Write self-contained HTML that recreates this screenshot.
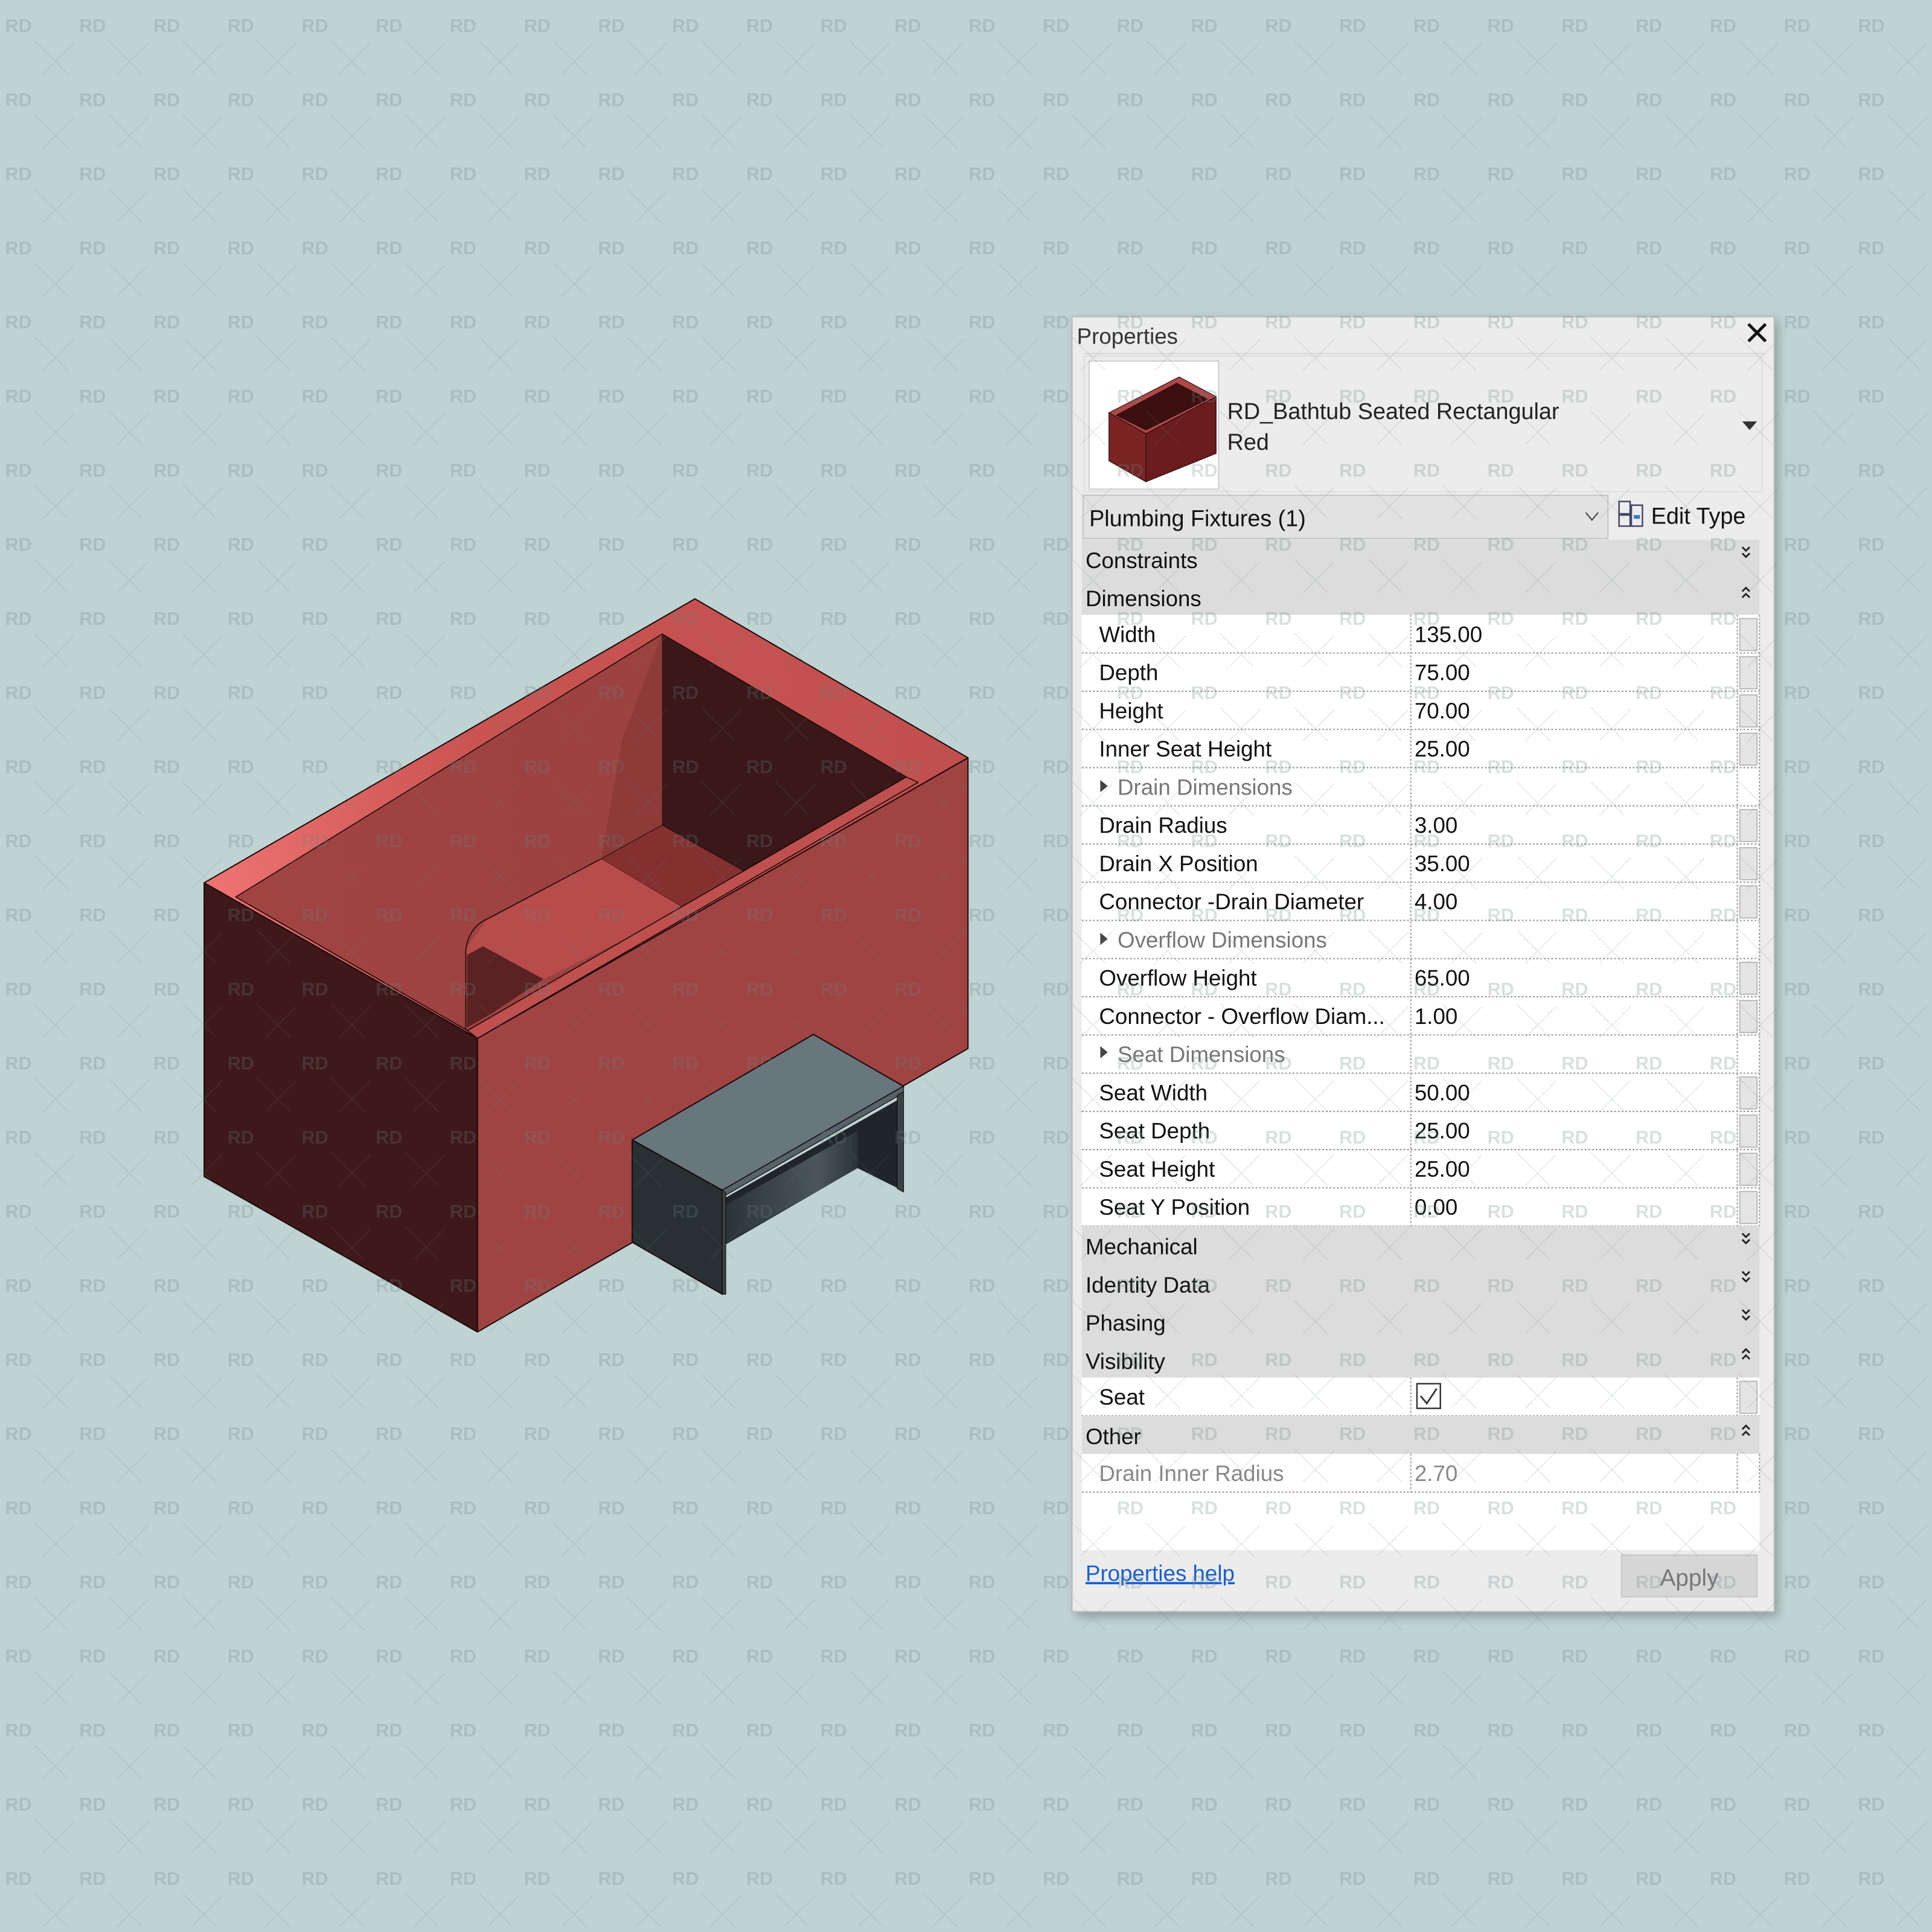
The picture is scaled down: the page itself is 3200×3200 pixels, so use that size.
<!DOCTYPE html>
<html><head><meta charset="utf-8"><style>
html,body{margin:0;padding:0;width:3200px;height:3200px;overflow:hidden;background:#bfd3d2}
svg{display:block}
text{font-family:"Liberation Sans","DejaVu Sans",sans-serif}
</style></head><body>
<svg width="3200" height="3200" viewBox="0 0 1568 1568" xmlns="http://www.w3.org/2000/svg">
<defs>
<pattern id="wm" x="0" y="0" width="60.15" height="60.15" patternUnits="userSpaceOnUse">
<text x="15" y="26" font-size="15" font-weight="bold" text-anchor="middle" fill="rgb(100,130,130)" fill-opacity="0.25">RD</text>
<path d="M28 33 L62 67 M62 33 L28 67" stroke="rgb(100,130,130)" stroke-opacity="0.18" stroke-width="0.8"/>
</pattern>
<linearGradient id="rim" x1="0" y1="0" x2="1" y2="0">
<stop offset="0" stop-color="#f07373"/><stop offset="0.35" stop-color="#c95452"/><stop offset="1" stop-color="#c0504e"/>
</linearGradient>
<linearGradient id="bw" x1="0" y1="0" x2="1" y2="0">
<stop offset="0" stop-color="#a04442"/><stop offset="0.85" stop-color="#9a4140"/><stop offset="1" stop-color="#6d2b2b"/>
</linearGradient>
<linearGradient id="bp" x1="0" y1="0" x2="1" y2="0">
<stop offset="0" stop-color="#2c3438"/><stop offset="0.7" stop-color="#4a565c"/><stop offset="1" stop-color="#2c3438"/>
</linearGradient>
<filter id="sh" x="-5%" y="-5%" width="110%" height="110%"><feGaussianBlur stdDeviation="4"/></filter>
</defs>
<rect width="1568" height="1568" fill="#bfd3d2"/>

<!-- bathtub -->
<g stroke="#1a0a0a" stroke-width="1" stroke-linejoin="round">
<polygon points="165.7,716.5 387.5,842.7 387.5,1081 165.7,954.8" fill="#3f1819"/>
<polygon points="387.5,842.7 785.6,615 785.6,851 387.5,1081" fill="#a04443"/>
<polygon points="165.7,716.5 564,486 785.6,615 387.5,842.7" fill="url(#rim)"/>
<polygon points="191.3,728 537.4,514.6 735.6,630.6 379.4,836.4" fill="url(#bw)" stroke-width="0.8"/>
<polygon points="537.4,514.6 735.6,630.6 603.6,706.7 537.4,669.6" fill="#3a1718" stroke-width="0.6"/>
<polygon points="537.4,514.6 537.4,669.6 488,697 505,600" fill="#8e3a39" stroke="none"/>
<polygon points="487.9,697 537.4,669.6 603.6,706.7 556.9,738" fill="#83302f" stroke-width="0.5"/>
<polygon points="395,747 487.9,697 556.9,738 441.1,794.6 378,812 378,770" fill="#b84c4b" stroke="none"/>
<path d="M378,836 L378,772 Q380,752 397,745 L487.9,697" fill="none" stroke-width="0.8"/>
<polygon points="379,834 379,775 392,768 441,794.6 400,822" fill="#5a2222" stroke="none"/>
<polygon points="379.4,836.4 735.6,630.6 745,635 387.5,842.7" fill="#c0504e" stroke-width="0.8"/>
<!-- bench -->
<polygon points="513.1,925.2 660.2,839.5 733.3,881.6 586.2,966" fill="#68767d"/>
<polygon points="513.1,925.2 586.2,966 586.2,1050.4 513.1,1008.2" fill="#283033"/>
<polygon points="589,972 728,893 728,964 696,948 589,1010" fill="#1f2528" stroke="none"/>
<polygon points="589,978 696,918 696,948 589,1009" fill="url(#bp)" stroke="none"/>
<polygon points="586.2,966 733.3,881.6 733.3,887 589,970" fill="#56636a" stroke-width="0.6"/>
<polygon points="728.2,889 733.3,886 733.3,967.4 728.2,964.6" fill="#3a4448" stroke-width="0.6"/>
<polygon points="586.2,966 589,968 589,1050.4 586.2,1050.4" fill="#3a4448" stroke-width="0.6"/>
</g>

<!-- panel -->
<rect x="873" y="260" width="570" height="1052" fill="#000" opacity="0.25" filter="url(#sh)"/>
<rect x="870" y="257" width="570" height="1051" fill="#ececec" stroke="#b9b9b9"/>
<text x="874" y="279" font-size="18" fill="#333">Properties</text>
<path d="M1419 263 L1433 277 M1433 263 L1419 277" stroke="#111" stroke-width="2.4"/>
<line x1="880" y1="287" x2="1432" y2="287" stroke="#d6d6d6"/>
<rect x="880" y="289" width="550" height="110" fill="#ececec" stroke="#dedede"/>
<rect x="884" y="293" width="105" height="104" fill="#fff" stroke="#d0d0d0"/>
<g stroke="#2a0c0c" stroke-width="0.6">
<polygon points="900,335 957,306 987,322 930,352" fill="#b04848"/>
<polygon points="930,352 987,322 987,368 930,391" fill="#6b1c1c"/>
<polygon points="900,335 930,352 930,391 900,374" fill="#7a2424"/>
<polygon points="906,337 955,311 980,324 930,349" fill="#3c1010"/>
</g>
<text x="996" y="340" font-size="18.5" fill="#222">RD_Bathtub Seated Rectangular</text>
<text x="996" y="365" font-size="18.5" fill="#222">Red</text>
<polygon points="1414,342 1426,342 1420,349" fill="#333"/>
<rect x="879" y="402" width="426" height="35" fill="#e2e2e2" stroke="#c4c4c4"/>
<text x="884" y="427" font-size="18.5" fill="#111">Plumbing Fixtures (1)</text>
<path d="M1287 416 L1292 422 L1297 416" fill="none" stroke="#555" stroke-width="1.2"/>
<g fill="none" stroke="#446" stroke-width="1.2"><rect x="1314" y="407" width="9" height="10"/><rect x="1314" y="418" width="9" height="9"/><rect x="1324" y="410" width="9" height="17"/></g>
<rect x="1326" y="418" width="5" height="3" fill="#3a78c8"/>
<text x="1340" y="425" font-size="18.5" fill="#111">Edit Type</text>

<!-- grid -->
<g font-size="18" fill="#111">
<rect x="878" y="438" width="550" height="61" fill="#dcdcdc"/>
<text x="881" y="461">Constraints</text>
<text x="881" y="492">Dimensions</text>
</g>
<rect x="878" y="499" width="550" height="496" fill="#fff"/>
<g stroke="#9a9a9a" stroke-width="1" stroke-dasharray="1.5,1.5">
<line x1="878" y1="530" x2="1428" y2="530"/><line x1="878" y1="561" x2="1428" y2="561"/>
<line x1="878" y1="592" x2="1428" y2="592"/><line x1="878" y1="623" x2="1428" y2="623"/>
<line x1="878" y1="654" x2="1428" y2="654"/><line x1="878" y1="685" x2="1428" y2="685"/>
<line x1="878" y1="716" x2="1428" y2="716"/><line x1="878" y1="747" x2="1428" y2="747"/>
<line x1="878" y1="778" x2="1428" y2="778"/><line x1="878" y1="809" x2="1428" y2="809"/>
<line x1="878" y1="840" x2="1428" y2="840"/><line x1="878" y1="871" x2="1428" y2="871"/>
<line x1="878" y1="902" x2="1428" y2="902"/><line x1="878" y1="933" x2="1428" y2="933"/>
<line x1="878" y1="964" x2="1428" y2="964"/><line x1="878" y1="995" x2="1428" y2="995"/>
<line x1="1145" y1="499" x2="1145" y2="995"/><line x1="1428" y1="499" x2="1428" y2="995"/>
<line x1="1410" y1="499" x2="1410" y2="995"/>
</g>
<g fill="#e4e4e4" stroke="#b0b0b0" stroke-width="0.8">
<rect x="1412" y="502" width="14" height="26"/><rect x="1412" y="533" width="14" height="26"/>
<rect x="1412" y="564" width="14" height="26"/><rect x="1412" y="595" width="14" height="26"/>
<rect x="1412" y="657" width="14" height="26"/><rect x="1412" y="688" width="14" height="26"/>
<rect x="1412" y="719" width="14" height="26"/><rect x="1412" y="781" width="14" height="26"/>
<rect x="1412" y="812" width="14" height="26"/><rect x="1412" y="874" width="14" height="26"/>
<rect x="1412" y="905" width="14" height="26"/><rect x="1412" y="936" width="14" height="26"/>
<rect x="1412" y="967" width="14" height="26"/>
</g>
<g font-size="18" fill="#111">
<text x="892" y="521">Width</text><text x="1148" y="521">135.00</text>
<text x="892" y="552">Depth</text><text x="1148" y="552">75.00</text>
<text x="892" y="583">Height</text><text x="1148" y="583">70.00</text>
<text x="892" y="614">Inner Seat Height</text><text x="1148" y="614">25.00</text>
<text x="892" y="676">Drain Radius</text><text x="1148" y="676">3.00</text>
<text x="892" y="707">Drain X Position</text><text x="1148" y="707">35.00</text>
<text x="892" y="738">Connector -Drain Diameter</text><text x="1148" y="738">4.00</text>
<text x="892" y="800">Overflow Height</text><text x="1148" y="800">65.00</text>
<text x="892" y="831">Connector - Overflow Diam...</text><text x="1148" y="831">1.00</text>
<text x="892" y="893">Seat Width</text><text x="1148" y="893">50.00</text>
<text x="892" y="924">Seat Depth</text><text x="1148" y="924">25.00</text>
<text x="892" y="955">Seat Height</text><text x="1148" y="955">25.00</text>
<text x="892" y="986">Seat Y Position</text><text x="1148" y="986">0.00</text>
</g>
<g font-size="18" fill="#777">
<polygon points="893,633 893,643 899,638" fill="#444"/><text x="907" y="645">Drain Dimensions</text>
<polygon points="893,757 893,767 899,762" fill="#444"/><text x="907" y="769">Overflow Dimensions</text>
<polygon points="893,849 893,859 899,854" fill="#444"/><text x="907" y="862">Seat Dimensions</text>
</g>
<rect x="878" y="995" width="550" height="123" fill="#dcdcdc"/>
<g font-size="18" fill="#111">
<text x="881" y="1018">Mechanical</text>
<text x="881" y="1049">Identity Data</text>
<text x="881" y="1080">Phasing</text>
<text x="881" y="1111">Visibility</text>
</g>
<rect x="878" y="1118" width="550" height="31" fill="#fff"/>
<g stroke="#9a9a9a" stroke-dasharray="1.5,1.5"><line x1="878" y1="1149" x2="1428" y2="1149"/><line x1="1145" y1="1118" x2="1145" y2="1149"/><line x1="1410" y1="1118" x2="1410" y2="1149"/></g>
<rect x="1412" y="1121" width="14" height="26" fill="#e4e4e4" stroke="#b0b0b0" stroke-width="0.8"/>
<text x="892" y="1140" font-size="18" fill="#111">Seat</text>
<rect x="1150" y="1123" width="19" height="20" fill="#fff" stroke="#333" stroke-width="1.2"/>
<path d="M1153 1133 L1158 1139 L1166 1127" fill="none" stroke="#333" stroke-width="1.4"/>
<rect x="878" y="1149" width="550" height="31" fill="#dcdcdc"/>
<text x="881" y="1172" font-size="18" fill="#111">Other</text>
<g fill="none" stroke="#222" stroke-width="1.4">
<path d="M1414 444 L1417 447 L1420 444 M1414 449 L1417 452 L1420 449"/>
<path d="M1414 480 L1417 477 L1420 480 M1414 485 L1417 482 L1420 485"/>
<path d="M1414 1001 L1417 1004 L1420 1001 M1414 1006 L1417 1009 L1420 1006"/>
<path d="M1414 1032 L1417 1035 L1420 1032 M1414 1037 L1417 1040 L1420 1037"/>
<path d="M1414 1063 L1417 1066 L1420 1063 M1414 1068 L1417 1071 L1420 1068"/>
<path d="M1414 1098 L1417 1095 L1420 1098 M1414 1103 L1417 1100 L1420 1103"/>
<path d="M1414 1160 L1417 1157 L1420 1160 M1414 1165 L1417 1162 L1420 1165"/>
</g>
<rect x="878" y="1180" width="550" height="78" fill="#fff"/>
<g stroke="#9a9a9a" stroke-dasharray="1.5,1.5"><line x1="878" y1="1211" x2="1428" y2="1211"/><line x1="1145" y1="1180" x2="1145" y2="1211"/><line x1="1410" y1="1180" x2="1410" y2="1211"/><line x1="1428" y1="1180" x2="1428" y2="1211"/></g>
<text x="892" y="1202" font-size="18" fill="#888">Drain Inner Radius</text>
<text x="1148" y="1202" font-size="18" fill="#888">2.70</text>
<text x="881" y="1283" font-size="18" fill="#1a5fd0" text-decoration="underline">Properties help</text>
<rect x="1316" y="1262" width="110" height="34" fill="#d6d6d6" stroke="#c8c8c8"/>
<text x="1371" y="1287" font-size="19" fill="#777" text-anchor="middle">Apply</text>

<rect width="1568" height="1568" fill="url(#wm)"/>
</svg>
</body></html>
